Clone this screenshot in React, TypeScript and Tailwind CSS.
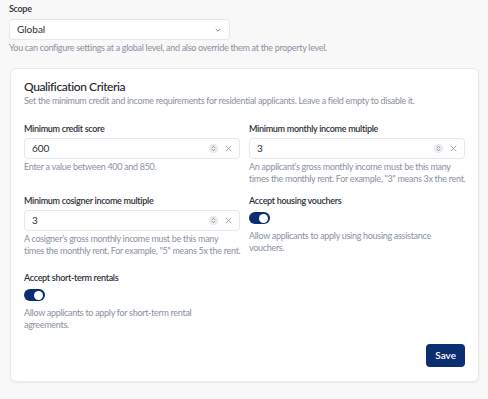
import React, { useState } from 'react';

const font = { fontFamily: 'Lato, "Noto Sans", sans-serif' };

const labelCls = 'text-[9px] font-semibold leading-[14px] tracking-[-0.3px] text-[#2b2f38]';
const helpCls = 'whitespace-nowrap text-[9px] leading-[12px] tracking-[-0.3px] text-[#8b91a0]';

// small stepper glyph used in number inputs
const StepperIcon = () => (
  <svg width="9" height="9" viewBox="0 0 16 16" fill="none">
    <circle cx="8" cy="8" r="7.2" fill="#eef0f3" stroke="#d4d7dd" strokeWidth="1" />
    <path d="M5.5 6.5 8 4l2.5 2.5M5.5 9.5 8 12l2.5-2.5" stroke="#6b7280" strokeWidth="1.4" strokeLinecap="round" strokeLinejoin="round" />
  </svg>
);

const ClearIcon = () => (
  <svg width="7" height="7" viewBox="0 0 10 10" fill="none">
    <path d="M1.5 1.5l7 7M8.5 1.5l-7 7" stroke="#9ca3af" strokeWidth="1.3" strokeLinecap="round" />
  </svg>
);

// help text is passed as lines so it wraps the same way as the design
function Help({ lines, className = '' }: { lines: string[]; className?: string }) {
  return (
    <p className={`${helpCls} ${className}`}>
      {lines.map((line, i) => (
        <React.Fragment key={i}>
          {i > 0 && <br />}
          {line}
        </React.Fragment>
      ))}
    </p>
  );
}

function NumberField({ label, value, help }: { label: string; value: string; help: string[] }) {
  return (
    <div className="flex flex-col">
      <label className={labelCls}>{label}</label>
      <div className="mt-[2px] flex h-[21px] items-center rounded-[4px] border border-[#e6e8ec] bg-white pl-[7px] pr-[7px]">
        <span className="flex-1 text-[10px] text-[#2b2f38]">{value}</span>
        <StepperIcon />
        <span className="ml-[7px] flex">
          <ClearIcon />
        </span>
      </div>
      <Help className="mt-[2px]" lines={help} />
    </div>
  );
}

function ToggleField({ label, help, on, className = '' }: { label: string; help: string[]; on: boolean; className?: string }) {
  const [checked, setChecked] = useState(on);
  return (
    <div className={`flex flex-col ${className}`}>
      <label className={labelCls}>{label}</label>
      <button
        onClick={() => setChecked(!checked)}
        className={`mt-[4px] flex h-[12px] w-[21px] items-center rounded-full px-[2px] ${checked ? 'justify-end bg-[#0b2d72]' : 'justify-start bg-gray-300'}`}
      >
        <span className="h-[9px] w-[9px] rounded-full bg-white" />
      </button>
      <Help className="mt-[6px]" lines={help} />
    </div>
  );
}

export default function App() {
  return (
    <div className="min-h-[399px] bg-[#f8f8f9] px-[9px] pt-[2px]" style={font}>
      {/* scope selector */}
      <div className="flex flex-col">
        <span className={labelCls}>Scope</span>
        <div className="mt-[3px] flex h-[21px] w-[221px] items-center justify-between rounded-[4px] border border-[#e6e8ec] bg-white pl-[7px] pr-[7px]">
          <span className="text-[10px] text-[#2b2f38]">Global</span>
          <svg width="8" height="8" viewBox="0 0 10 10" fill="none">
            <path d="M2.5 4l2.5 2.5L7.5 4" stroke="#7b8190" strokeWidth="1.2" strokeLinecap="round" strokeLinejoin="round" />
          </svg>
        </div>
        <Help className="mt-[2px]" lines={['You can configure settings at a global level, and also override them at the property level.']} />
      </div>

      {/* qualification card */}
      <div className="ml-[1px] mt-[14px] w-[469px] rounded-[6px] border border-[#e8e9ec] bg-white px-[13px] pb-[14px] pt-[10px] shadow-[0_1px_2px_rgba(0,0,0,0.06)]">
        <h2 className="text-[12px] font-medium leading-[16px] tracking-[-0.4px] text-[#22252c]">Qualification Criteria</h2>
        <Help
          lines={['Set the minimum credit and income requirements for residential applicants. Leave a field empty to disable it.']}
        />

        <div className="mt-[15px] grid grid-cols-2 gap-x-[9px] gap-y-[9px]">
          <NumberField label="Minimum credit score" value="600" help={['Enter a value between 400 and 850.']} />
          <NumberField
            label="Minimum monthly income multiple"
            value="3"
            help={[
              'An applicant\u2019s gross monthly income must be this many',
              'times the monthly rent. For example, "3" means 3x the rent.',
            ]}
          />
          <NumberField
            label="Minimum cosigner income multiple"
            value="3"
            help={[
              'A cosigner\u2019s gross monthly income must be this many',
              'times the monthly rent. For example, "5" means 5x the rent.',
            ]}
          />
          <ToggleField
            label="Accept housing vouchers"
            help={['Allow applicants to apply using housing assistance', 'vouchers.']}
            on
          />
          <ToggleField
            className="mt-[5px]"
            label="Accept short-term rentals"
            help={['Allow applicants to apply for short-term rental', 'agreements.']}
            on
          />
        </div>

        <div className="mt-[13px] flex justify-end">
          <button className="h-[23px] rounded-[4px] bg-[#0b2d72] px-[9px] text-[10px] font-semibold text-white">Save</button>
        </div>
      </div>
    </div>
  );
}
